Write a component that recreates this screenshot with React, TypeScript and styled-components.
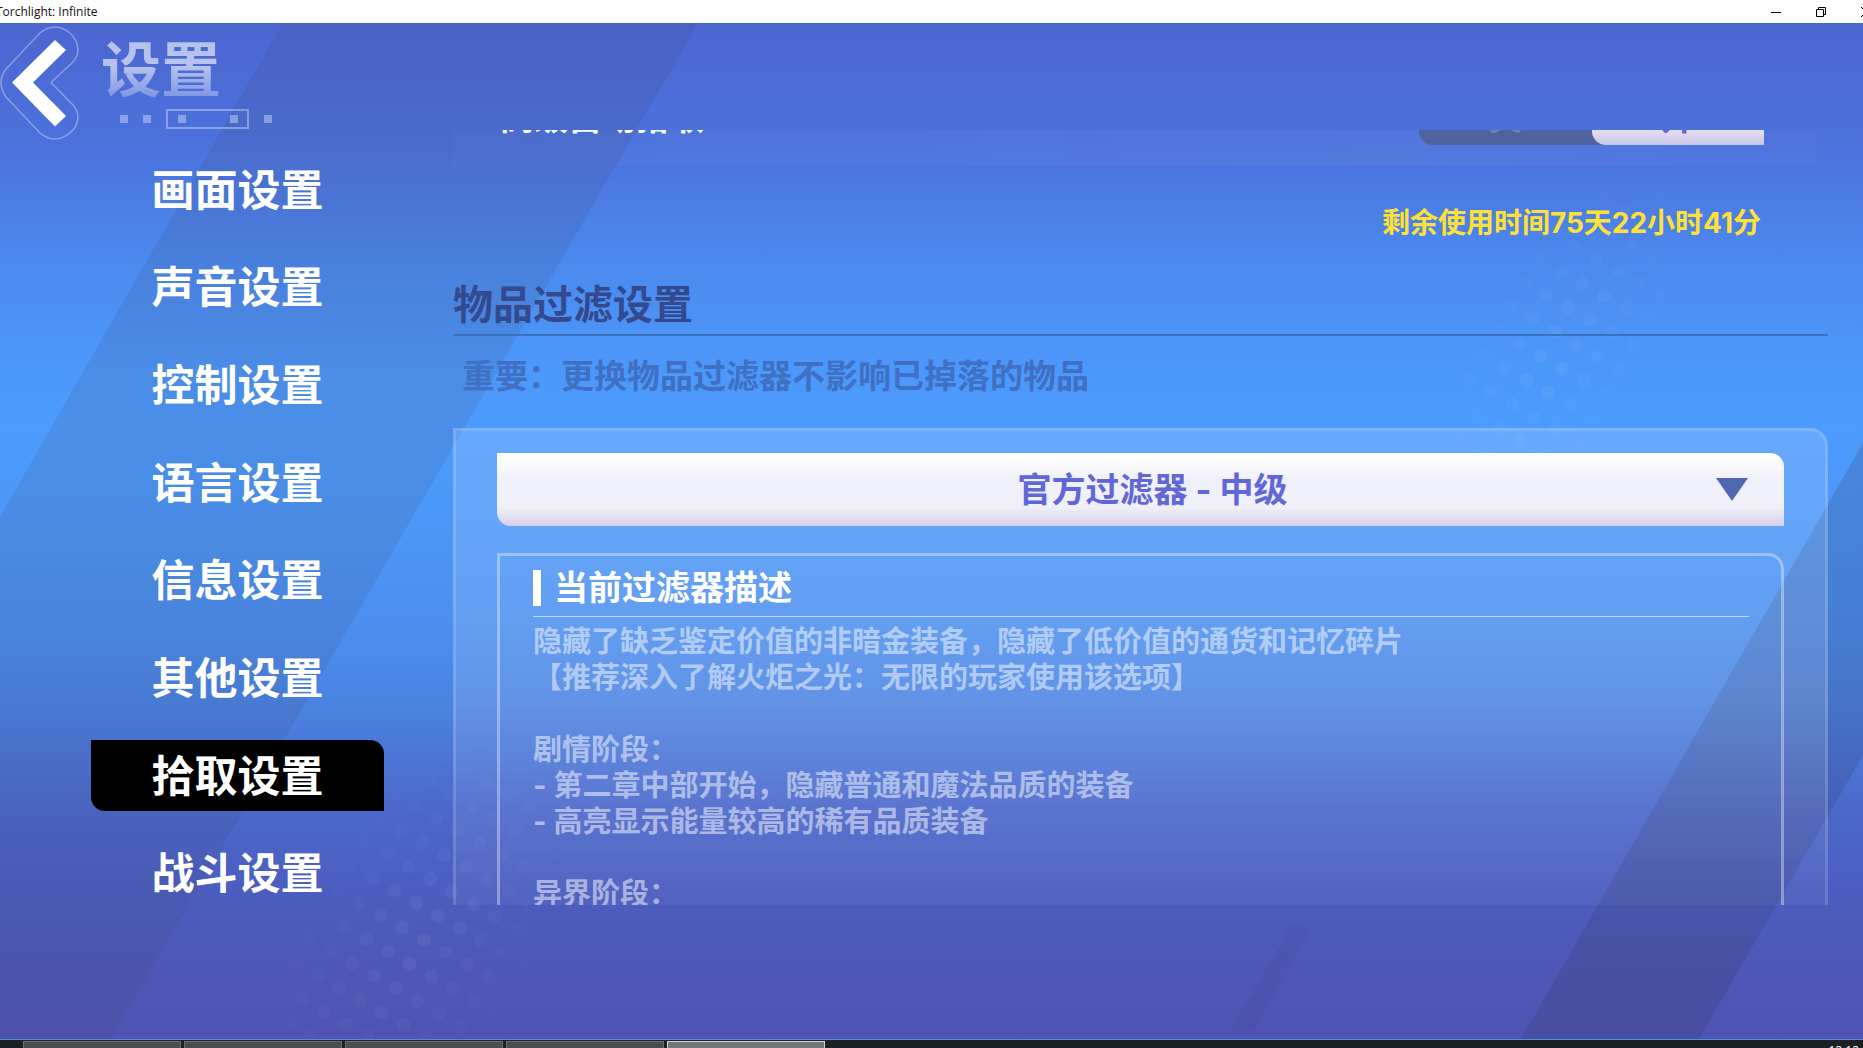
import React, { useState } from "react";
import styled, { createGlobalStyle } from "styled-components";

const Global = createGlobalStyle`
  *, *::before, *::after { box-sizing: border-box; }
  html, body, #root { height: 100%; }
  body { margin: 0; overflow: hidden; }
  body, button, select {
    font-family: Inter, "Noto Sans CJK SC", sans-serif;
    font-weight: 700;
  }
  button { border: 0; padding: 0; background: none; cursor: pointer; }
  h1, h2, h3, p { margin: 0; font-weight: 700; }
`;

const Window = styled.div`
  display: flex;
  flex-direction: column;
  height: 100vh;
  overflow: hidden;
`;

const TitleBar = styled.header`
  display: flex;
  flex: none;
  align-items: center;
  justify-content: space-between;
  height: 23px;
  background: #fff;
  overflow: hidden;
`;

const WindowTitle = styled.span`
  margin-left: -4px;
  padding-top: 1px;
  color: #111;
  font: 400 12px/16px "Open Sans", sans-serif;
`;

const WindowControls = styled.div`
  display: flex;
  margin-right: -25px;
`;

const WindowButton = styled.button`
  display: flex;
  align-items: center;
  justify-content: center;
  width: 45px;
  height: 20px;
`;

const Game = styled.main`
  position: relative;
  display: grid;
  grid-template-columns: 453px minmax(0, 1fr);
  flex: 1;
  min-height: 0;
  isolation: isolate;
  background: linear-gradient(
    #4c66d0 0%,
    #4c72dc 12%,
    #4b8aef 24%,
    #4c98fa 34%,
    #4c9bfd 40%,
    #4c98f8 48%,
    #4b8eee 60%,
    #4a83e2 67%,
    #4b73d5 73%,
    #4b67ca 78%,
    #4b5dbe 86%,
    #4e57b6 93%,
    #4f53b2 100%
  );
`;

const Backdrop = styled.svg`
  position: absolute;
  inset: 0;
  z-index: -1;
  width: 100%;
  height: 100%;
`;

const Side = styled.aside`
  display: flex;
  flex-direction: column;
  min-height: 0;
`;

const Head = styled.div`
  display: flex;
  gap: 21px;
  height: 131px;
`;

const BackButton = styled.button`
  width: 80px;
  height: 120px;
`;

const HeadText = styled.div`
  display: flex;
  flex-direction: column;
  padding-top: 12px;
`;

const PageTitle = styled.h1`
  font-size: 60px;
  line-height: 70px;
  color: transparent;
  background: linear-gradient(rgba(255, 255, 255, 0.6) 45%, rgba(255, 255, 255, 0.28) 90%);
  background-clip: text;
  -webkit-background-clip: text;
`;

const TitleMarks = styled.svg`
  margin: 3px 0 0 17px;
`;

const Nav = styled.nav`
  display: flex;
  flex: 1;
  flex-direction: column;
  justify-content: space-between;
  align-items: flex-start;
  padding: 0 0 130px 91px;
`;

const NavButton = styled.button<{ $active: boolean }>`
  width: 293px;
  height: 71px;
  border-radius: 0 14px;
  background: ${(p) => (p.$active ? "#000" : "transparent")};
  color: #fff;
  font-size: 43px;
  line-height: 60px;
`;

const Scroller = styled.section`
  margin: 107px 35px 134px 0;
  min-height: 0;
  overflow: hidden;
`;

const OptionRow = styled.div`
  display: flex;
  align-items: center;
  justify-content: space-between;
  height: 95px;
  margin: -60px 13px 0 0;
  padding: 0 50px 0 46px;
  border: 1px solid rgba(255, 255, 255, 0.01);
  background: linear-gradient(90deg, rgba(255, 255, 255, 0.01), rgba(255, 255, 255, 0.04) 70%, rgba(255, 255, 255, 0.02));
  color: #fff;
  font-size: 34px;
  line-height: 44px;
`;

const Toggle = styled.div`
  display: flex;
  width: 345px;
  height: 55px;
  border-radius: 0 14px;
  background: linear-gradient(#4a5aa6, #50659f);
`;

const ToggleButton = styled.button<{ $on: boolean }>`
  flex: 1;
  border-radius: 0 14px;
  background: ${(p) => (p.$on ? "linear-gradient(#fff, #efedf8 60%, #c9c5e8)" : "none")};
  color: ${(p) => (p.$on ? "#6166d8" : "#7382b4")};
  font-size: 34px;
  line-height: 44px;
`;

const TimeLeft = styled.p`
  margin-top: 39px;
  padding-right: 67px;
  color: #ffe135;
  font-size: 28px;
  line-height: 38px;
  text-align: right;
`;

const SectionTitle = styled.h2`
  margin-top: 34px;
  border-bottom: 2px solid #3973bd;
  color: #344a8e;
  font-size: 40px;
  line-height: 58px;
`;

const Note = styled.p`
  padding: 15px 0 27px 9px;
  color: #3f70c3;
  font-size: 33px;
  line-height: 50px;
`;

const Panel = styled.div`
  padding: 22px 41px 0;
  border: 3px solid rgba(255, 255, 255, 0.14);
  border-radius: 0 18px 0 0;
  background: linear-gradient(
      rgba(255, 255, 255, 0.14),
      rgba(255, 255, 255, 0.13) 50%,
      rgba(255, 255, 255, 0.04) 88%
    )
    border-box;
`;

const SelectBox = styled.label`
  display: grid;
  align-items: center;
  height: 73px;
  border-radius: 0 14px;
  background: linear-gradient(#fff, #f9f9fd 18%, #f0f0fa 36%, #f0f0f9 74%, #d6cfeb 100%);
  & > * { grid-area: 1 / 1; }
`;

const FilterSelect = styled.select`
  width: 100%;
  height: 73px;
  padding: 0 0 0 24px;
  border: 0;
  appearance: none;
  background: none;
  color: #6166d8;
  font-size: 34px;
  line-height: 50px;
  text-align: center;
  text-align-last: center;
`;

const Caret = styled.svg`
  justify-self: end;
  margin-right: 36px;
  pointer-events: none;
`;

const Description = styled.article`
  margin-top: 27px;
  padding: 4px 32px 60px 33px;
  border: 3px solid rgba(255, 255, 255, 0.36);
  border-radius: 0 16px 0 0;
`;

const DescriptionTitle = styled.h3`
  display: flex;
  align-items: center;
  gap: 13px;
  height: 57px;
  border-bottom: 1px solid rgba(255, 255, 255, 0.6);
  color: #fff;
  font-size: 34px;
  line-height: 48px;
  &::before {
    content: "";
    width: 8px;
    height: 36px;
    background: #fff;
  }
`;

const DescriptionText = styled.p`
  padding-top: 7px;
  color: rgba(255, 255, 255, 0.5);
  font-size: 29px;
  line-height: 36px;
  white-space: pre-line;
`;

const Taskbar = styled.footer`
  display: flex;
  flex: none;
  justify-content: space-between;
  height: 9px;
  border-top: 1px solid #4a90e8;
  background: #1b2025;
  overflow: hidden;
`;

const TaskList = styled.div`
  display: flex;
  gap: 3px;
  padding: 1px 0 0 23px;
`;

const Task = styled.button<{ $active: boolean }>`
  width: 158px;
  height: 40px;
  border: 1px solid ${(p) => (p.$active ? "#cfd1d2" : "#6c7072")};
  background: ${(p) => (p.$active ? "#73777a" : "#4a4e50")};
`;

const Clock = styled.time`
  padding: 3px 4px 0 0;
  color: #fff;
  font: 400 12px/16px "Open Sans", sans-serif;
`;

const sections = [
  "画面设置",
  "声音设置",
  "控制设置",
  "语言设置",
  "信息设置",
  "其他设置",
  "拾取设置",
  "战斗设置",
];

const description = `隐藏了缺乏鉴定价值的非暗金装备，隐藏了低价值的通货和记忆碎片
【推荐深入了解火炬之光：无限的玩家使用该选项】

剧情阶段：
- 第二章中部开始，隐藏普通和魔法品质的装备
- 高亮显示能量较高的稀有品质装备

异界阶段：`;

function BackdropArt() {
  return (
    <Backdrop viewBox="0 23 1863 1016" preserveAspectRatio="none" aria-hidden="true">
      <defs>
        <pattern id="dots" width="25" height="28" patternUnits="userSpaceOnUse" patternTransform="rotate(30)">
          <circle cx="12" cy="14" r="7" fill="#fff" />
        </pattern>
        <radialGradient id="fade">
          <stop offset="0" stopColor="#fff" />
          <stop offset="1" stopColor="#fff" stopOpacity="0" />
        </radialGradient>
        <mask id="dotMask">
          <ellipse cx="420" cy="930" rx="120" ry="240" fill="url(#fade)" transform="rotate(30 420 930)" />
          <ellipse cx="1560" cy="350" rx="90" ry="210" fill="url(#fade)" transform="rotate(30 1560 350)" />
        </mask>
      </defs>
      <path d="M283 23H698L111 1039H0V517Z" fill="#404870" fillOpacity="0.14" />
      <path d="M1863 443V755L1699 1039H1521Z" fill="#303860" fillOpacity="0.2" />
      <path d="M1291 926Q1306 922 1308 934L1254 1031H1230Z" fill="#303860" fillOpacity="0.08" />
      <rect y="23" width="1863" height="1016" fill="url(#dots)" fillOpacity="0.06" mask="url(#dotMask)" />
    </Backdrop>
  );
}

export default function App() {
  const [section, setSection] = useState("拾取设置");
  const [advanced, setAdvanced] = useState(true);
  return (
    <>
      <Global />
      <Window>
        <TitleBar>
          <WindowTitle>Torchlight: Infinite</WindowTitle>
          <WindowControls>
            <WindowButton aria-label="Minimize">
              <svg width="12" height="12" stroke="#000" fill="none"><path d="M1 6.500H11" /></svg>
            </WindowButton>
            <WindowButton aria-label="Restore">
              <svg width="12" height="12" stroke="#000" fill="none">
                <path d="M1.500 3.500H8.500V10.500H1.500ZM3.500 3.500V1.500H10.500V8.500H8.500" />
              </svg>
            </WindowButton>
            <WindowButton aria-label="Close">
              <svg width="12" height="12" stroke="#000" fill="none"><path d="M1 1L11 11M11 1L1 11" /></svg>
            </WindowButton>
          </WindowControls>
        </TitleBar>

        <Game>
          <BackdropArt />
          <Side>
            <Head>
              <BackButton aria-label="返回">
                <svg width="80" height="120" viewBox="0 23 80 120" fill="none">
                  <path
                    d="M40 33Q55 21 70 33C80 43 80 54 73 62L51 82.500L73 105C80 113 80 124 70 133Q55 145 40 133L6 97Q-4 82 6 69Z"
                    stroke="#fff"
                    strokeOpacity="0.35"
                    strokeWidth="1.500"
                  />
                  <path d="M55 40L66 50L33 82.500L66 116L55 126.500L12 82.500Z" fill="#fff" />
                </svg>
              </BackButton>
              <HeadText>
                <PageTitle>设置</PageTitle>
                <TitleMarks width="156" height="22" fill="#fff" fillOpacity="0.35">
                  <path d="M2 7h8v8h-8zM25 7h8v8h-8zM60 7h8v8h-8zM112 7h8v8h-8zM146 7h8v8h-8z" />
                  <rect x="49" y="2" width="81" height="18" fill="none" stroke="#fff" strokeOpacity="0.35" strokeWidth="2" />
                </TitleMarks>
              </HeadText>
            </Head>
            <Nav>
              {sections.map((name) => (
                <NavButton key={name} $active={name === section} onClick={() => setSection(name)}>
                  {name}
                </NavButton>
              ))}
            </Nav>
          </Side>

          <Scroller>
            <OptionRow>
              <span>高级自动拾取</span>
              <Toggle>
                <ToggleButton $on={!advanced} onClick={() => setAdvanced(false)}>关</ToggleButton>
                <ToggleButton $on={advanced} onClick={() => setAdvanced(true)}>开</ToggleButton>
              </Toggle>
            </OptionRow>
            <TimeLeft>剩余使用时间75天22小时41分</TimeLeft>
            <SectionTitle>物品过滤设置</SectionTitle>
            <Note>重要：更换物品过滤器不影响已掉落的物品</Note>
            <Panel>
              <SelectBox>
                <FilterSelect aria-label="物品过滤器" defaultValue="medium">
                  <option value="medium">官方过滤器 - 中级</option>
                </FilterSelect>
                <Caret width="32" height="23" fill="#5068b4"><path d="M0 0H32L16 23Z" /></Caret>
              </SelectBox>
              <Description>
                <DescriptionTitle>当前过滤器描述</DescriptionTitle>
                <DescriptionText>{description}</DescriptionText>
              </Description>
            </Panel>
          </Scroller>
        </Game>

        <Taskbar>
          <TaskList>
            {[0, 1, 2, 3, 4].map((n) => (
              <Task key={n} $active={n === 4} aria-label={`窗口 ${n + 1}`} />
            ))}
          </TaskList>
          <Clock>12:12</Clock>
        </Taskbar>
      </Window>
    </>
  );
}
